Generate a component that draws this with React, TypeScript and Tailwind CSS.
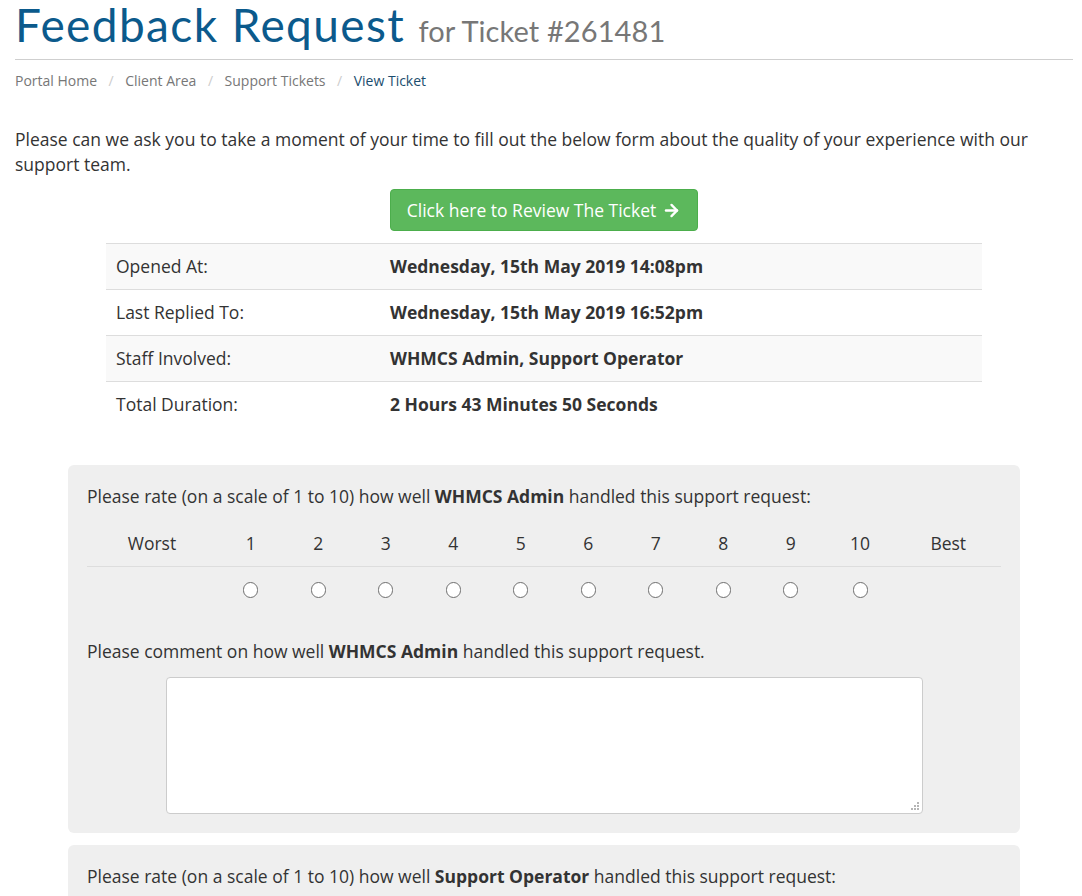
import { ArrowRight } from "lucide-react";

const DETAILS = [
  ["Opened At:", "Wednesday, 15th May 2019 14:08pm"],
  ["Last Replied To:", "Wednesday, 15th May 2019 16:52pm"],
  ["Staff Involved:", "WHMCS Admin, Support Operator"],
  ["Total Duration:", "2 Hours 43 Minutes 50 Seconds"],
];

const SCALE = [1, 2, 3, 4, 5, 6, 7, 8, 9, 10];

function RatingPanel({ name, withComment = true }: { name: string; withComment?: boolean }) {
  return (
    <div className="mx-auto w-[952px] rounded-md bg-[#efefef] px-[19px] pt-[19px] pb-[19px]">
      <p>
        Please rate (on a scale of 1 to 10) how well <b className="font-bold">{name}</b> handled this support request:
      </p>
      <div className="mt-[22px]">
        <div className="grid grid-cols-[130px_repeat(9,67.5px)_71px_1fr] border-b border-[#dddddd] pb-[10px] text-center">
          <span>Worst</span>
          {SCALE.map(n => (
            <span key={n}>{n}</span>
          ))}
          <span>Best</span>
        </div>
        <div className="grid grid-cols-[130px_repeat(9,67.5px)_71px_1fr] items-center pt-[15px] pb-[6px] text-center">
          <span />
          {SCALE.map(n => (
            <span key={n} className="flex justify-center">
              <input
                type="radio"
                name={name}
                className="h-[16px] w-[15px] appearance-none rounded-full border border-[#6e6e6e] bg-white"
              />
            </span>
          ))}
          <span />
        </div>
      </div>
      {withComment && (
        <>
          <p className="mt-[35px]">
            Please comment on how well <b className="font-bold">{name}</b> handled this support request.
          </p>
          <div className="mt-[13px] flex justify-center">
            <div className="relative">
              <textarea className="block h-[137px] w-[757px] resize-none rounded border border-[#cccccc] bg-white" />
              {/* resize grip */}
              <svg className="absolute right-[3px] bottom-[3px]" width="10" height="10" viewBox="0 0 10 10" fill="#b5b5b5">
                <rect x="7" y="1" width="2" height="2" />
                <rect x="4" y="4" width="2" height="2" />
                <rect x="7" y="4" width="2" height="2" />
                <rect x="1" y="7" width="2" height="2" />
                <rect x="4" y="7" width="2" height="2" />
                <rect x="7" y="7" width="2" height="2" />
              </svg>
            </div>
          </div>
        </>
      )}
    </div>
  );
}

export default function App() {
  return (
    <div className="h-screen overflow-hidden bg-white pl-[15px] pr-[9px] text-[17.5px] leading-[25px] text-[#333333] font-['Open_Sans',sans-serif]">
      <div className="border-b border-[#cfcfcf] pb-[3px]">
        <h1 className="font-['Lato',sans-serif] text-[46px] leading-[50px] tracking-[1.4px] text-[#0b5a8c]">
          Feedback Request <small className="text-[29px] tracking-[0.1px] text-[#777777]">for Ticket #261481</small>
        </h1>
      </div>

      <ol className="mt-[11px] flex text-[14px] leading-[20px] text-[#777777]">
        <li>Portal Home</li>
        <li className="px-[11.5px] text-[#cccccc]">/</li>
        <li>Client Area</li>
        <li className="px-[11.5px] text-[#cccccc]">/</li>
        <li>Support Tickets</li>
        <li className="px-[11.5px] text-[#cccccc]">/</li>
        <li className="text-[#1b4d6e]">View Ticket</li>
      </ol>

      <p className="mt-[36px]">
        Please can we ask you to take a moment of your time to fill out the below form about the quality of your experience with our support team.
      </p>

      <div className="mt-[12px] flex justify-center">
        <button className="flex h-[42px] items-center gap-[6px] rounded-[4px] border border-[#4cae4c] bg-[#5cb85c] px-[16px] text-white">
          Click here to Review The Ticket
          <ArrowRight size={19} strokeWidth={3} />
        </button>
      </div>

      <table className="mx-auto mt-[12px] w-[876px] border-collapse">
        <tbody>
          {DETAILS.map(([label, value], i) => (
            <tr key={label} className={i % 2 === 0 ? "bg-[#f9f9f9]" : ""}>
              <td className="w-[284px] px-[10px] py-[10px] border-t border-[#dddddd]">{label}</td>
              <td className="px-0 py-[10px] border-t border-[#dddddd] font-bold">{value}</td>
            </tr>
          ))}
        </tbody>
      </table>

      <div className="mt-[38px] flex flex-col gap-[12px] pb-8">
        <RatingPanel name="WHMCS Admin" />
        <RatingPanel name="Support Operator" />
      </div>
    </div>
  );
}
